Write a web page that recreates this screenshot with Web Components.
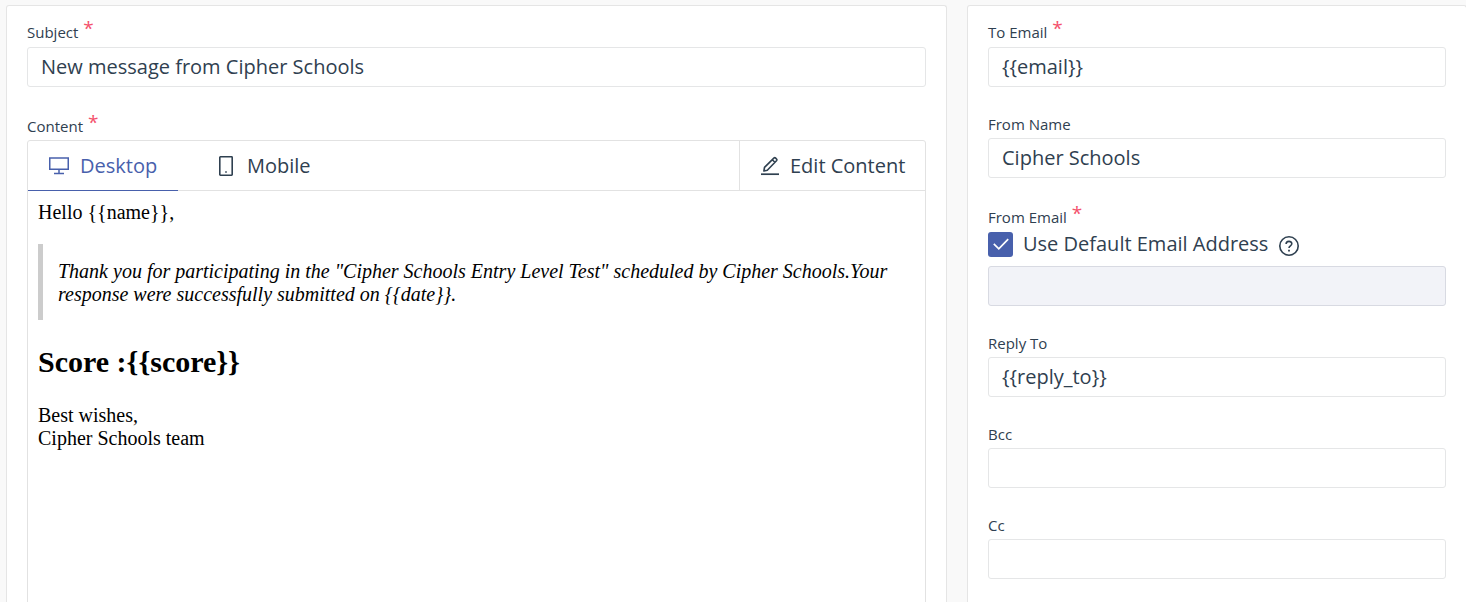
<!DOCTYPE html>
<html lang="en">
<head>
<meta charset="utf-8">
<title>Email template</title>
<style>
html, body { margin: 0; height: 100%; }
body { background: #f9f9f9; color: #2f4050; font-family: "Open Sans", "Noto Sans", sans-serif; overflow: hidden; }
</style>
</head>
<body>
<email-settings></email-settings>
<script>
class BaseElement extends HTMLElement {
  connectedCallback() {
    if (this.shadowRoot) return;
    this.attachShadow({ mode: 'open' }).innerHTML = this.render();
  }
}

customElements.define('app-icon', class extends BaseElement {
  render() {
    const shapes = {
      desktop: ['20', '17', '<path d="M.75 .9h18.5v11.4H.75zM10 12.5v3.5M5 16.4h10" stroke-width="1.5"/>'],
      mobile: ['14', '20', '<rect x=".8" y=".8" width="12.4" height="18.4" rx=".6" stroke-width="1.6"/><path d="M6.2 16h1.6" stroke-width="1.6"/>'],
      edit: ['18', '18', '<path d="M2.9 14l.6-3.6L13.1.9q.7-.5 1.3 0l1.3 1.4q.5.6 0 1.2L6.3 13.2zM11.3 2.7l2.6 2.6" stroke-width="1.6" stroke-linejoin="round"/><path d="M0 17.2h18" stroke-width="1.7"/>'],
      help: ['20', '20', '<circle cx="10" cy="10" r="9.2" stroke-width="1.6"/><path d="M7.1 8.1C7.1 4.5 12.8 4.6 12.8 7.8c0 2-2.8 2-2.8 4.1" stroke-width="1.6"/><path d="M10 13.8v1.8" stroke-width="1.8"/>'],
      check: ['16', '12', '<path d="M.8 5.8l5 5L15.2 1.2" stroke-width="1.7"/>']
    };
    const [w, h, body] = shapes[this.getAttribute('name')];
    return `<style>:host{display:block;flex:none;white-space:normal}svg{display:block;overflow:visible}</style><svg width="${w}" height="${h}" viewBox="0 0 ${w} ${h}" fill="none" stroke="currentColor">${body}</svg>`;
  }
});

customElements.define('ui-panel', class extends BaseElement {
  render() {
    return `<style>:host{display:block;box-sizing:border-box;background:#fff;border:1px solid #e5e5e5;border-bottom:0;border-radius:3px 3px 0 0;padding:16px 20px 0}</style><slot></slot>`;
  }
});

customElements.define('form-field', class extends BaseElement {
  render() {
    return `<style>
      :host{display:block}
      .label{display:flex;height:21px;font-size:15px;line-height:21px;white-space:nowrap}
      .star{color:#f4516c;font-size:19px;line-height:13px;margin-left:5px}
    </style><div class="label"><span>${this.getAttribute('label')}</span>${this.hasAttribute('required') ? '<span class="star">*</span>' : ''}</div><slot></slot>`;
  }
});

customElements.define('text-box', class extends BaseElement {
  render() {
    return `<style>
      :host{display:block;box-sizing:border-box;height:40px;border:1px solid #e5e6e7;border-radius:3px;background:#fff;padding:0 13px;font-size:20px;line-height:38px;white-space:nowrap}
      :host([disabled]){background:#f2f3f8;border-color:#d8dae2}
    </style><slot></slot>`;
  }
});

customElements.define('check-row', class extends BaseElement {
  render() {
    return `<style>
      :host{display:flex;height:25px;font-size:20px;line-height:23px;white-space:nowrap}
      .box{width:25px;height:25px;border-radius:3px;background:#4860ac;color:#fff;display:grid;place-items:center;margin-right:10px}
      .box app-icon{margin-top:-1px}
      .help{margin:4px 0 0 11px}
    </style><div class="box"><app-icon name="check"></app-icon></div><slot></slot><app-icon class="help" name="help"></app-icon>`;
  }
});

customElements.define('tab-button', class extends BaseElement {
  render() {
    return `<style>
      :host{display:flex;box-sizing:border-box;align-items:center;height:50px;font-size:20px;line-height:50px;white-space:nowrap;border-bottom:1px solid #e2e2e2}
      :host([active]){color:#4860ac;border-bottom-color:#4860ac}
      app-icon{margin-right:var(--gap,11px)}
      app-icon:not([name=desktop]){margin-top:1px}
    </style><app-icon name="${this.getAttribute('icon')}"></app-icon><slot></slot>`;
  }
});

customElements.define('content-preview', class extends BaseElement {
  render() {
    return `<style>
      :host{display:block;box-sizing:border-box;height:520px;border:1px solid #e2e2e2;border-radius:3px}
      .bar{display:flex}
      .desktop{width:150px;padding-left:21px}
      .mobile{flex:1;padding-left:41px;--gap:14px}
      .edit{width:186px;padding-left:21px;border-left:1px solid #e2e2e2}
      .mail{padding:10px 10px 0;color:#000;font:20px/23px "Liberation Serif","Times New Roman",serif}
      p{margin:0}
      blockquote{margin:20px 0 0;box-sizing:border-box;height:76px;padding:16px 0 0 15px;border-left:5px solid #ccc;font-style:italic;white-space:nowrap}
      h2{margin:25px 0 0;font-size:30px;line-height:34px}
      .bye{margin-top:25px}
    </style>
    <div class="bar">
      <tab-button class="desktop" icon="desktop" active>Desktop</tab-button>
      <tab-button class="mobile" icon="mobile">Mobile</tab-button>
      <tab-button class="edit" icon="edit">Edit Content</tab-button>
    </div>
    <div class="mail">
      <p>Hello {{name}},</p>
      <blockquote>Thank you for participating in the "Cipher Schools Entry Level Test" scheduled by Cipher Schools.Your<br>response were successfully submitted on {{date}}.</blockquote>
      <h2>Score :{{score}}</h2>
      <p class="bye">Best wishes,<br>Cipher Schools team</p>
    </div>`;
  }
});

customElements.define('email-settings', class extends BaseElement {
  render() {
    return `<style>
      :host{display:grid;box-sizing:border-box;height:602px;overflow:hidden;grid-template-columns:941px 500px;column-gap:20px;padding:5px 0 0 6px}
      text-box{margin-top:4px}
      .content{margin-top:29px}
      content-preview{margin-top:3px}
      .name{margin-top:27px}
      .from{margin-top:29px}
      .reply{margin-top:27px}
      .copy{margin-top:27px}
      .name text-box,.reply text-box,.copy text-box{margin-top:3px}
      .from check-row{margin-top:4px}
      .from text-box{margin-top:9px}
    </style>
    <ui-panel>
      <form-field label="Subject" required><text-box>New message from Cipher Schools</text-box></form-field>
      <form-field class="content" label="Content" required><content-preview></content-preview></form-field>
    </ui-panel>
    <ui-panel>
      <form-field label="To Email" required><text-box>{{email}}</text-box></form-field>
      <form-field class="name" label="From Name"><text-box>Cipher Schools</text-box></form-field>
      <form-field class="from" label="From Email" required><check-row>Use Default Email Address</check-row><text-box disabled></text-box></form-field>
      <form-field class="reply" label="Reply To"><text-box>{{reply_to}}</text-box></form-field>
      <form-field class="copy" label="Bcc"><text-box></text-box></form-field>
      <form-field class="copy" label="Cc"><text-box></text-box></form-field>
    </ui-panel>`;
  }
});
</script>
</body>
</html>
